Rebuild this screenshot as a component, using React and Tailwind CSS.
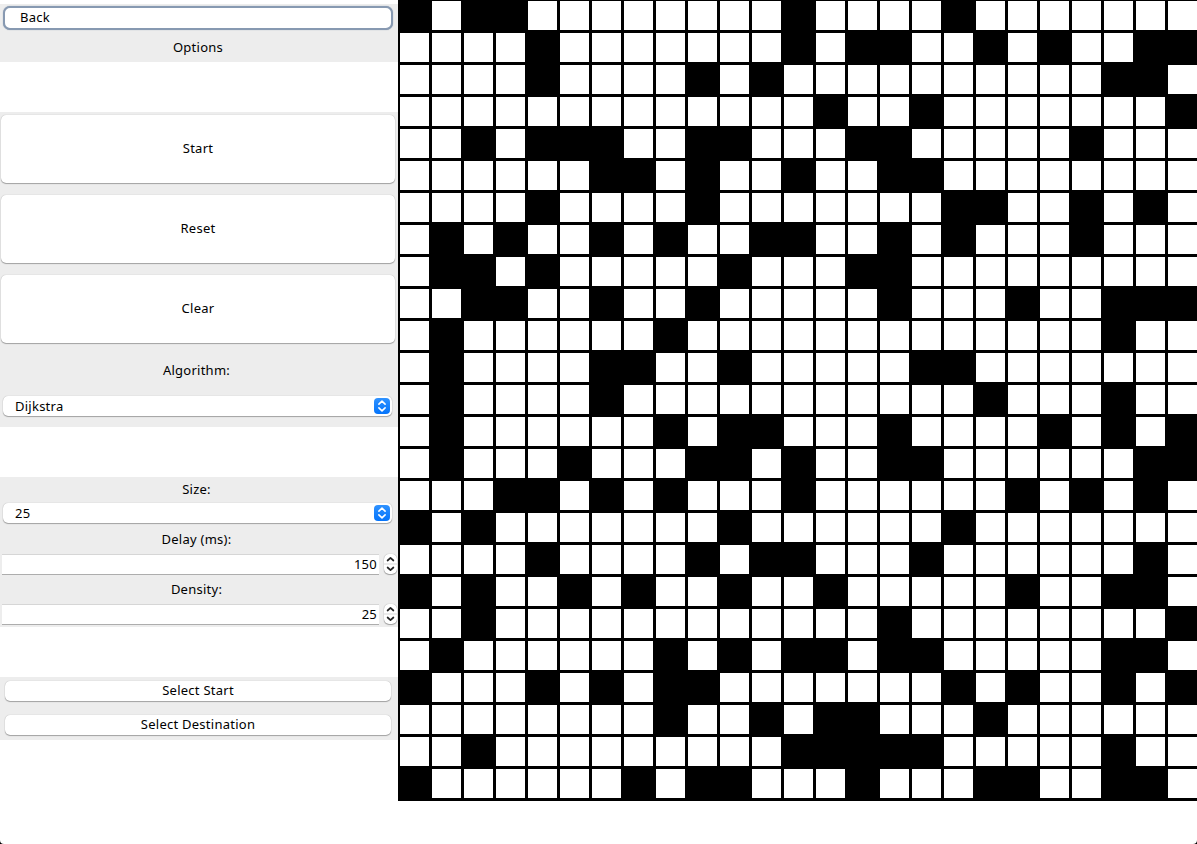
const WALLS = [
  [0, 2, 3, 12, 17],
  [4, 12, 14, 15, 18, 20, 23, 24],
  [4, 9, 11, 22, 23],
  [13, 16, 24],
  [2, 4, 5, 6, 9, 10, 14, 15, 21],
  [6, 7, 9, 12, 15, 16],
  [4, 9, 17, 18, 21, 23],
  [1, 3, 6, 8, 11, 12, 15, 17, 21],
  [1, 2, 4, 10, 14, 15],
  [2, 3, 6, 9, 15, 19, 22, 23, 24],
  [1, 8, 22],
  [1, 6, 7, 10, 16, 17],
  [1, 6, 18, 22],
  [1, 8, 10, 11, 15, 20, 22, 24],
  [1, 5, 9, 10, 12, 15, 16, 23, 24],
  [3, 4, 6, 8, 12, 19, 21, 23],
  [0, 2, 10, 17],
  [4, 9, 11, 12, 16, 23],
  [0, 2, 5, 7, 10, 13, 19, 22, 23],
  [2, 15, 24],
  [1, 8, 10, 12, 13, 15, 16, 22, 23],
  [0, 4, 6, 8, 9, 17, 19, 22, 24],
  [8, 11, 13, 14, 18],
  [2, 12, 13, 14, 15, 16, 22],
  [0, 7, 9, 10, 14, 18, 19, 22, 23],
];

const COLUMNS = Array.from({ length: 25 }, (_, i) => i);

function Grid() {
  return (
    <div className="h-[801px] w-[799px] shrink-0 overflow-hidden bg-black pt-px pl-0.5">
      <div className="grid w-[797px] grid-cols-[repeat(25,29px)] gap-[3px]">
        {WALLS.map((walls, row) =>
          COLUMNS.map((col) => (
            <div
              key={`${row}-${col}`}
              className={walls.includes(col) ? "h-[29px] bg-black" : "h-[29px] bg-white"}
            />
          ))
        )}
      </div>
    </div>
  );
}

function Label({ className, children }) {
  return <div className={`flex w-[393px] items-center justify-center ${className}`}>{children}</div>;
}

function Button({ className, children }) {
  return (
    <button
      className={`flex items-center justify-center rounded-[5px] bg-white pb-0.5 shadow-[0_0_1px_rgba(0,0,0,0.3),0_1px_1px_rgba(0,0,0,0.3)] ${className}`}
    >
      {children}
    </button>
  );
}

function Combo({ children }) {
  return (
    <div className="ml-[3px] flex h-5 w-[389px] items-center justify-between rounded-[5px] bg-white pr-0.5 pl-3 shadow-[0_0_1px_rgba(0,0,0,0.3),0_1px_1px_rgba(0,0,0,0.3)]">
      <span>{children}</span>
      <svg width="16" height="16" viewBox="0 0 16 16" fill="none">
        <defs>
          <linearGradient id="comboBlue" x1="0" y1="0" x2="0" y2="1">
            <stop offset="0" stopColor="#2f92ff" />
            <stop offset="1" stopColor="#0474fb" />
          </linearGradient>
        </defs>
        <rect width="16" height="16" rx="4" fill="url(#comboBlue)" />
        <path
          d="M4.9 6.1 8 3.2l3.1 2.9M4.9 9.9 8 12.8l3.1-2.9"
          stroke="white"
          strokeWidth="1.6"
          strokeLinecap="round"
          strokeLinejoin="round"
        />
      </svg>
    </div>
  );
}

function Spinner({ value }) {
  return (
    <div className="flex h-[21px] w-[397px] items-start justify-between pl-0.5">
      <div className="flex h-[21px] w-[377px] items-center justify-end border-t border-b border-t-[#d6d6d6] border-b-[#adadad] bg-white pr-0.5 pb-0.5">
        {value}
      </div>
      <div className="h-5 w-[13px] rounded-[5px] bg-white shadow-[0_0_1px_rgba(0,0,0,0.4),0_1px_1px_rgba(0,0,0,0.3)]">
        <svg width="13" height="20" viewBox="0 0 13 20" fill="none">
          <path d="M0 10h13" stroke="#d9d9d9" />
          <path
            d="M3.6 6.5 6.5 3.9l2.9 2.6M3.6 13.5l2.9 2.6 2.9-2.6"
            stroke="#222"
            strokeWidth="1.7"
            strokeLinecap="round"
            strokeLinejoin="round"
          />
        </svg>
      </div>
    </div>
  );
}

export default function App() {
  return (
    <div className="h-[844px] w-[1197px] overflow-hidden bg-black">
      <div className="flex h-full items-start overflow-hidden rounded-b-[4px] bg-white font-['Noto_Sans',sans-serif] text-[13px] leading-4 font-[450] tracking-[0.25px] text-black">
        <aside className="flex w-[398px] shrink-0 flex-col pt-1">
          <section className="flex h-[58px] flex-col bg-[#ededed] pt-0.5">
            <div className="ml-[3px] flex h-6 w-[390px] items-center rounded-[7px] border-[2.5px] border-[#8799b1] bg-white pb-0.5 pl-[15px] shadow-[0_0_1px_#8295ae]">
              Back
            </div>
            <Label className="mt-[9px] pl-[3px]">Options</Label>
          </section>

          <section className="mt-[50px] flex h-[315px] flex-col bg-[#ededed] pt-[3px]">
            <div className="ml-px flex flex-col gap-3">
              <Button className="h-[68px] w-[394px]">Start</Button>
              <Button className="h-[68px] w-[394px]">Reset</Button>
              <Button className="h-[68px] w-[394px]">Clear</Button>
            </div>
            <Label className="mt-[19px] mb-[18px]">Algorithm:</Label>
            <Combo>Dijkstra</Combo>
          </section>

          <section className="mt-[50px] flex h-[150px] flex-col bg-[#ededed] pt-1">
            <Label className="mb-[6px]">Size:</Label>
            <Combo>25</Combo>
            <Label className="mt-2 mb-[7px]">Delay (ms):</Label>
            <Spinner value="150" />
            <Label className="mt-[6px] mb-[7px]">Density:</Label>
            <Spinner value="25" />
          </section>

          <section className="mt-[50px] flex h-[63px] flex-col gap-3.5 bg-[#ededed] pt-1 pl-[5px]">
            <Button className="h-5 w-[386px]">Select Start</Button>
            <Button className="h-5 w-[386px]">Select Destination</Button>
          </section>
        </aside>
        <Grid />
      </div>
    </div>
  );
}
